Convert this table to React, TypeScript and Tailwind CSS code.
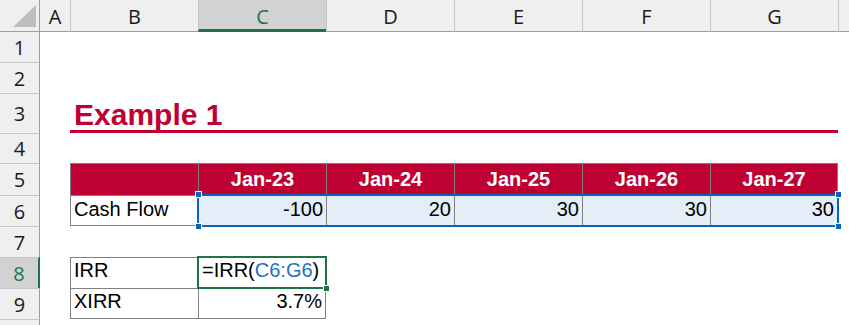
const cellFont = "font-['Liberation_Sans',Arial,sans-serif]"
const headFont = "font-['Open_Sans','Noto_Sans',sans-serif]"

// column headings across the top (A..G plus the clipped H)
const columns = [
  { label: 'A', cls: 'col-start-2' },
  { label: 'B', cls: 'col-start-3 border-l' },
  { label: 'C', cls: 'col-start-4 border-l', active: true },
  { label: 'D', cls: 'col-start-5 border-l' },
  { label: 'E', cls: 'col-start-6 border-l' },
  { label: 'F', cls: 'col-start-7 border-l' },
  { label: 'G', cls: 'col-start-8 border-l' },
  { label: '', cls: 'col-start-9 border-l' },
]

// row numbers down the left edge
const rows = [
  { label: '1', cls: 'row-start-2' },
  { label: '2', cls: 'row-start-3 border-t' },
  { label: '3', cls: 'row-start-4 border-t' },
  { label: '4', cls: 'row-start-5 border-t' },
  { label: '5', cls: 'row-start-6 border-t' },
  { label: '6', cls: 'row-start-7 border-t' },
  { label: '7', cls: 'row-start-8 border-t' },
  { label: '8', cls: 'row-start-9 border-t', active: true },
  { label: '9', cls: 'row-start-10 border-t' },
  { label: '', cls: 'row-start-11 border-t' },
]

const periods = [
  { label: 'Jan-23', value: '-100', cls: 'col-start-4' },
  { label: 'Jan-24', value: '20', cls: 'col-start-5' },
  { label: 'Jan-25', value: '30', cls: 'col-start-6' },
  { label: 'Jan-26', value: '30', cls: 'col-start-7' },
  { label: 'Jan-27', value: '30', cls: 'col-start-8 border-r' },
]

const Handle = ({ className }: { className: string }) => (
  <div className={`absolute h-[7px] w-[7px] border border-white ${className}`} />
)

export default function App() {
  return (
    <div className="h-[325px] w-[849px] overflow-hidden bg-white">
      <div className="grid h-full grid-cols-[40px_30px_128px_128px_128px_128px_128px_128px_1fr] grid-rows-[32px_30px_31px_40px_30px_32px_31px_31px_31px_31px_1fr]">
        {/* select-all corner */}
        <div className="col-start-1 row-start-1 border-r border-b border-[#9e9e9e] bg-[#efefef]">
          <svg width="39" height="31" viewBox="0 0 39 31">
            <polygon points="36,5 36,27 13,27" fill="#bdbdbd" />
          </svg>
        </div>

        {columns.map((c) => (
          <div
            key={c.cls}
            className={`${c.cls} row-start-1 flex justify-center pt-[7px] text-[20px] leading-none ${headFont} ${
              c.active
                ? 'border-b-[3px] border-l-[#c6c6c6] border-b-[#217346] bg-[#d2d2d2] text-[#217346]'
                : 'border-b border-l-[#c6c6c6] border-b-[#9e9e9e] bg-[#efefef] text-[#1a1a1a]'
            }`}
          >
            {c.label}
          </div>
        ))}

        {rows.map((r) => (
          <div
            key={r.cls}
            className={`${r.cls} col-start-1 flex items-center justify-center overflow-hidden pt-[1px] text-[20px] leading-none ${headFont} border-t-[#c6c6c6] ${
              r.active
                ? 'border-r-[2px] border-r-[#217346] bg-[#d2d2d2] text-[#217346]'
                : 'border-r border-r-[#9e9e9e] bg-[#efefef] text-[#1a1a1a]'
            }`}
          >
            {r.label}
          </div>
        ))}

        {/* title */}
        <div
          className={`col-span-6 col-start-3 row-start-4 flex items-end border-b-[3px] border-[#bf0033] pl-[4px] text-[30px] leading-none font-bold text-[#bf0033] ${cellFont}`}
        >
          Example 1
        </div>

        {/* cash flow table header */}
        <div className="col-start-3 row-start-6 border-t border-l border-[#808080] bg-[#bf0033]" />
        {periods.map((p) => (
          <div
            key={p.label}
            className={`${p.cls} row-start-6 flex items-end justify-center border-t border-l border-[#808080] bg-[#bf0033] pb-[6px] text-[20px] leading-[20px] font-bold text-white ${cellFont}`}
          >
            {p.label}
          </div>
        ))}

        {/* cash flow values */}
        <div
          className={`col-start-3 row-start-7 flex items-end border-t border-b border-l border-[#808080] pb-[6px] pl-[3px] text-[20px] leading-[20px] text-black ${cellFont}`}
        >
          Cash Flow
        </div>
        {periods.map((p) => (
          <div
            key={p.value + p.cls}
            className={`${p.cls} row-start-7 flex items-end justify-end border-t border-b border-l border-[#808080] bg-[#e4eef8] pr-[3px] pb-[6px] text-[20px] leading-[20px] text-black ${cellFont}`}
          >
            {p.value}
          </div>
        ))}

        {/* highlighted range C6:G6 */}
        <div className="pointer-events-none relative col-span-5 col-start-4 row-start-7">
          <div className="absolute -inset-[1px] border-2 border-[#0d63b5]" />
          <Handle className="-top-[4px] -left-[3px] bg-[#0d63b5]" />
          <Handle className="-bottom-[4px] -left-[3px] bg-[#0d63b5]" />
          <Handle className="-top-[4px] -right-[4px] bg-[#0d63b5]" />
          <Handle className="-right-[4px] -bottom-[4px] bg-[#0d63b5]" />
        </div>

        {/* IRR / XIRR block */}
        <div
          className={`col-start-3 row-start-9 flex items-end border-t border-l border-[#808080] pb-[8px] pl-[3px] text-[20px] leading-[20px] text-black ${cellFont}`}
        >
          IRR
        </div>
        <div
          className={`col-start-4 row-start-9 flex items-end border-t border-r border-l border-[#808080] pb-[8px] pl-[3px] text-[20px] leading-[20px] text-black ${cellFont}`}
        >
          =IRR(<span className="text-[#1f6fc4]">C6:G6</span>)
        </div>
        <div
          className={`col-start-3 row-start-10 flex items-end border-t border-b border-l border-[#808080] pb-[7px] pl-[3px] text-[20px] leading-[20px] text-black ${cellFont}`}
        >
          XIRR
        </div>
        <div
          className={`col-start-4 row-start-10 flex items-end justify-end border border-[#808080] pr-[3px] pb-[7px] text-[20px] leading-[20px] text-black ${cellFont}`}
        >
          3.7%
        </div>

        {/* active cell C8 */}
        <div className="pointer-events-none relative col-start-4 row-start-9">
          <div className="absolute -inset-[1px] border-2 border-[#217346]" />
          <Handle className="-right-[4px] -bottom-[4px] bg-[#217346]" />
        </div>
      </div>
    </div>
  )
}
